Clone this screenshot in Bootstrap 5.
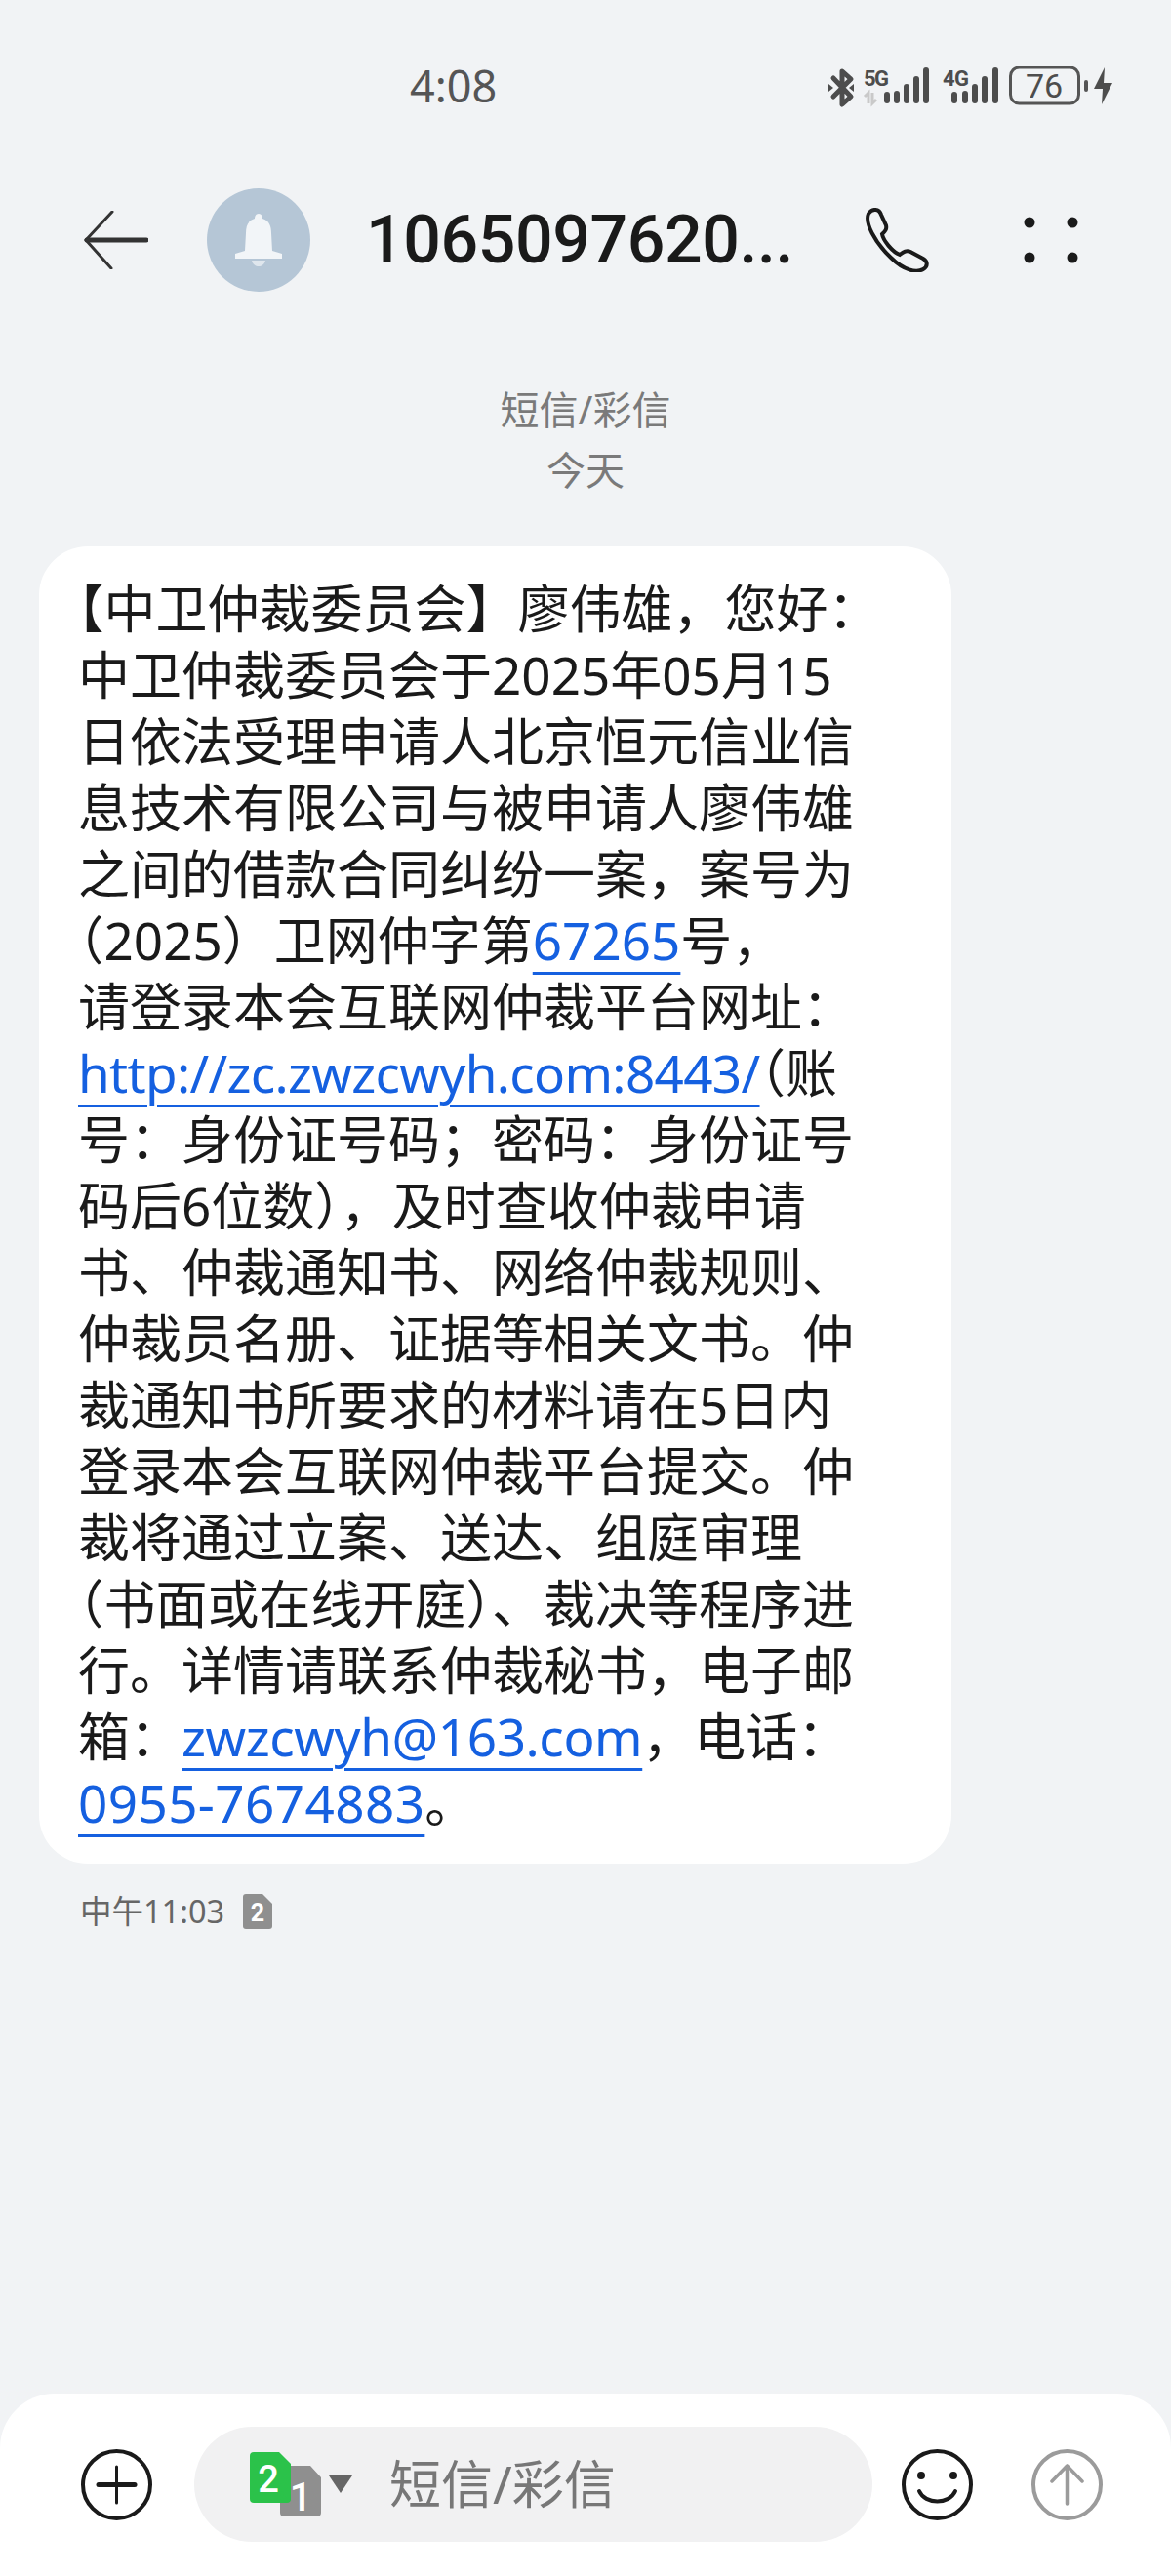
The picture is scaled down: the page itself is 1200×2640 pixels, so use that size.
<!DOCTYPE html>
<html lang="zh-CN">
<head>
<meta charset="UTF-8">
<title>短信</title>
<link href="https://cdn.jsdelivr.net/npm/bootstrap@5.3.0/dist/css/bootstrap.min.css" rel="stylesheet">
<style>
    html, body { height: 2640px; }
    body {
        background: #f1f3f5;
        color: #1a1a1a;
        font-family: "Noto Sans", "Noto Sans CJK SC", sans-serif;
        overflow: hidden;
    }
    svg { display: block; flex: none; }
    .status-bar { height: 172px; padding: 60px 56px 0 420px; }
    .status-time { font-family: "Noto Sans", sans-serif; font-size: 45px; line-height: 56px; color: #555; }
    .status-icons { margin-top: 8px; }
    .top-bar { height: 148px; padding: 0 0 0 86px; }
    .avatar { flex: none; width: 106px; height: 106px; margin-left: 60px; background: #b5c6d6; }
    .peer-name { flex: none; width: 440px; margin-left: 57px; font-family: Roboto, sans-serif; font-size: 68px; font-weight: 500; letter-spacing: -.4px; line-height: 80px; color: #1a1a1a; white-space: nowrap; }
    .call-icon { margin-left: 71px; }
    .more-icon { margin-left: 97px; }
    .day-label { font-size: 40px; line-height: 62px; color: #7a7a7a; }
    .labels { padding-top: 69px; }
    .bubble { width: 935px; margin: 47px 0 0 40px; padding: 30px 40px 28px; background: #fff; border-radius: 50px; font-size: 53px; line-height: 68px; white-space: nowrap; }
    .bubble a { color: #1560e0; text-decoration: underline; text-decoration-thickness: 2.5px; text-underline-offset: 12px; }
    .bubble .url-link { letter-spacing: -.67px; }
    .bubble .mail-link { letter-spacing: -.4px; }
    .bubble .tel-link { letter-spacing: .4px; }
    .half { font-feature-settings: "halt"; }
    .msg-meta { padding: 27px 0 0 82px; font-size: 32.5px; line-height: 44px; color: #666; }
    .sim-mark { margin-left: 19px; }
    .composer { height: 187px; background: #fff; border-radius: 56px 56px 0 0; padding: 34px 70px 35px 83px; }
    .round-icon { width: 73px; height: 73px; }
    .input-pill { flex: none; width: 695px; height: 118px; margin-left: 43px; background: #f1f1f2; border-radius: 59px; padding-left: 57px; font-size: 53px; color: #777; }
    .pill-text { margin-left: 38px; line-height: 60px; }
    .smile-icon { margin-left: 30px; }
    .send-icon { margin-left: 60px; }
</style>
</head>
<body class="d-flex flex-column">

<div class="status-bar d-flex align-items-start">
    <div class="status-time">4:08</div>
    <svg class="status-icons ms-auto" width="296" height="44" viewBox="0 0 296 44">
        <!-- bluetooth with a stroke across it -->
        <g fill="none" stroke="#4d4d4d" stroke-width="5" stroke-linejoin="round" stroke-linecap="round">
            <path d="M6 12 L24 31 L15 39 L15 5 L24 13 L6 31"/>
        </g>
        <path d="M1 18 L6 22 L1 26Z M27 18 L22 22 L27 26Z" fill="#4d4d4d"/>
        <text x="37" y="20" font-family="Roboto, sans-serif" font-size="22" font-weight="700" fill="#4d4d4d" textLength="26">5G</text>
        <path d="M42 38V27L38 31M46 27V38L50 34" fill="none" stroke="#c9c9c9" stroke-width="3"/>
        <g fill="#4d4d4d">
            <rect x="58" y="26" width="6" height="12" rx="3"/>
            <rect x="68" y="25" width="6" height="13" rx="3"/>
            <rect x="78" y="18" width="6" height="20" rx="3"/>
            <rect x="88" y="10" width="6" height="28" rx="3"/>
            <rect x="98" y="1" width="6" height="37" rx="3"/>
        </g>
        <text x="118" y="20" font-family="Roboto, sans-serif" font-size="22" font-weight="700" fill="#4d4d4d" textLength="27">4G</text>
        <g fill="#4d4d4d">
            <rect x="127" y="26" width="6" height="12" rx="3"/>
            <rect x="138" y="25" width="6" height="13" rx="3"/>
            <rect x="148" y="18" width="6" height="20" rx="3"/>
            <rect x="158" y="10" width="6" height="28" rx="3"/>
            <rect x="169" y="1" width="6" height="37" rx="3"/>
        </g>
        <rect x="187.500" y="1" width="70" height="37" rx="9" fill="none" stroke="#555" stroke-width="3"/>
        <text x="222" y="32" text-anchor="middle" font-family="Roboto, sans-serif" font-size="34" fill="#4d4d4d">76</text>
        <rect x="263" y="14" width="4" height="12" rx="2" fill="#555"/>
        <path d="M284 1 L273 23 L282 23 L281 39 L292 17 L283 17Z" fill="#4d4d4d"/>
    </svg>
</div>

<div class="top-bar d-flex align-items-center">
    <svg width="66" height="60" viewBox="0 0 66 60">
        <path d="M29 1 L2 30 L28 59" fill="none" stroke="#333" stroke-width="3" stroke-linecap="round"/>
        <path d="M3 30 H64" fill="none" stroke="#333" stroke-width="5" stroke-linecap="round"/>
    </svg>
    <div class="avatar rounded-circle d-flex align-items-center justify-content-center">
        <svg width="52" height="54" viewBox="0 0 52 54">
            <path d="M26 0 C29 0 30 3 30 5 C37 7 39 13 39 20 L40 38 L50 41 V46 H2 V41 L12 38 L13 20 C13 13 15 7 22 5 C22 3 23 0 26 0Z" fill="#f2f5f8"/>
            <path d="M19 48 H33 C32 52 29 54 26 54 C23 54 20 52 19 48Z" fill="#dfe6ed"/>
        </svg>
    </div>
    <div class="peer-name">1065097620...</div>
    <svg class="call-icon" width="66" height="66" viewBox="0 0 66 66">
        <path d="M4 6 C8 0 15 1 17 7 L22 18 C23 22 21 24 18 27 C19 33 28 45 36 48 C40 45 43 43 47 45 L60 52 C65 55 65 60 60 63 C53 67 40 64 27 51 C10 35 0 15 4 6Z" fill="none" stroke="#1a1a1a" stroke-width="4"/>
    </svg>
    <svg class="more-icon" width="56" height="48" viewBox="0 0 56 48" fill="#1a1a1a">
        <circle cx="6" cy="6" r="5.500"/><circle cx="50" cy="6" r="5.500"/>
        <circle cx="6" cy="42" r="5.500"/><circle cx="50" cy="42" r="5.500"/>
    </svg>
</div>

<div class="labels text-center">
    <div class="day-label">短信/彩信</div>
    <div class="day-label">今天</div>
</div>

<div class="bubble">
    <span class="half">【</span>中卫仲裁委员会】廖伟雄，您好：<br>
    中卫仲裁委员会于2025年05月15<br>
    日依法受理申请人北京恒元信业信<br>
    息技术有限公司与被申请人廖伟雄<br>
    之间的借款合同纠纷一案，案号为<br>
    <span class="half">（</span>2025）卫网仲字第<a href="#">67265</a>号，<br>
    请登录本会互联网仲裁平台网址：<br>
    <a class="url-link" href="#">http://zc.zwzcwyh.com:8443/</a><span class="half">（</span>账<br>
    号：身份证号码；密码：身份证号<br>
    码后6位数），及时查收仲裁申请<br>
    书、仲裁通知书、网络仲裁规则、<br>
    仲裁员名册、证据等相关文书。仲<br>
    裁通知书所要求的材料请在5日内<br>
    登录本会互联网仲裁平台提交。仲<br>
    裁将通过立案、送达、组庭审理<br>
    <span class="half">（</span>书面或在线开庭）、裁决等程序进<br>
    行。详情请联系仲裁秘书，电子邮<br>
    箱：<a class="mail-link" href="#">zwzcwyh@163.com</a>，电话：<br>
    <a class="tel-link" href="#">0955-7674883</a>。
</div>

<div class="msg-meta d-flex align-items-center">
    <span>中午11:03</span>
    <svg class="sim-mark" width="30" height="36" viewBox="0 0 30 36">
        <path d="M3 0 H20 L30 10 V33 A3 3 0 0 1 27 36 H3 A3 3 0 0 1 0 33 V3 A3 3 0 0 1 3 0Z" fill="#8f8f8f"/>
        <text x="15" y="28" text-anchor="middle" font-family="Roboto, sans-serif" font-size="25" font-weight="700" fill="#fff">2</text>
    </svg>
</div>

<div class="composer d-flex align-items-center mt-auto">
    <svg class="round-icon" viewBox="0 0 73 73" fill="none" stroke="#1a1a1a">
        <circle cx="36.500" cy="36.500" r="34.500" stroke-width="4"/>
        <path d="M36.500 18 V55" stroke-width="3" stroke-linecap="round"/>
        <path d="M18 36.500 H55" stroke-width="5" stroke-linecap="round"/>
    </svg>
    <div class="input-pill d-flex align-items-center">
        <svg width="73" height="84" viewBox="0 -9 73 84">
            <path d="M34 14 H62 L73 26 V62 A4 4 0 0 1 69 66 H35 A4 4 0 0 1 31 62 V18 A4 4 0 0 1 34 14Z" fill="#8f8f8f"/>
            <text x="52" y="60" text-anchor="middle" font-family="Roboto, sans-serif" font-size="40" font-weight="500" fill="#fff">1</text>
            <path d="M4 0 H30 L42 12 V48 A4 4 0 0 1 38 52 H4 A4 4 0 0 1 0 48 V4 A4 4 0 0 1 4 0Z" fill="#2bc24a"/>
            <text x="19" y="41" text-anchor="middle" font-family="Roboto, sans-serif" font-size="38" font-weight="500" fill="#fff">2</text>
        </svg>
        <svg class="ms-2" width="24" height="18" viewBox="0 0 24 18"><path d="M0 0 H24 L12 18Z" fill="#666"/></svg>
        <span class="pill-text">短信/彩信</span>
    </div>
    <svg class="round-icon smile-icon" viewBox="0 0 73 73" fill="none" stroke="#1a1a1a">
        <circle cx="36.500" cy="36.500" r="34.500" stroke-width="4"/>
        <circle cx="20" cy="27" r="4" fill="#1a1a1a" stroke="none"/>
        <circle cx="53" cy="27" r="4" fill="#1a1a1a" stroke="none"/>
        <path d="M18 43 C24 57 49 57 55 43" stroke-width="4" stroke-linecap="round"/>
    </svg>
    <svg class="round-icon send-icon" viewBox="0 0 73 73" fill="none" stroke="#9b9b9b">
        <circle cx="36.500" cy="36.500" r="34.500" stroke-width="4"/>
        <path d="M36.500 17 V56 M21 33 L36.500 17 L52 33" stroke-width="3.500" stroke-linecap="round" stroke-linejoin="round"/>
    </svg>
</div>

<script src="https://cdn.jsdelivr.net/npm/bootstrap@5.3.0/dist/js/bootstrap.bundle.min.js"></script>
</body>
</html>
